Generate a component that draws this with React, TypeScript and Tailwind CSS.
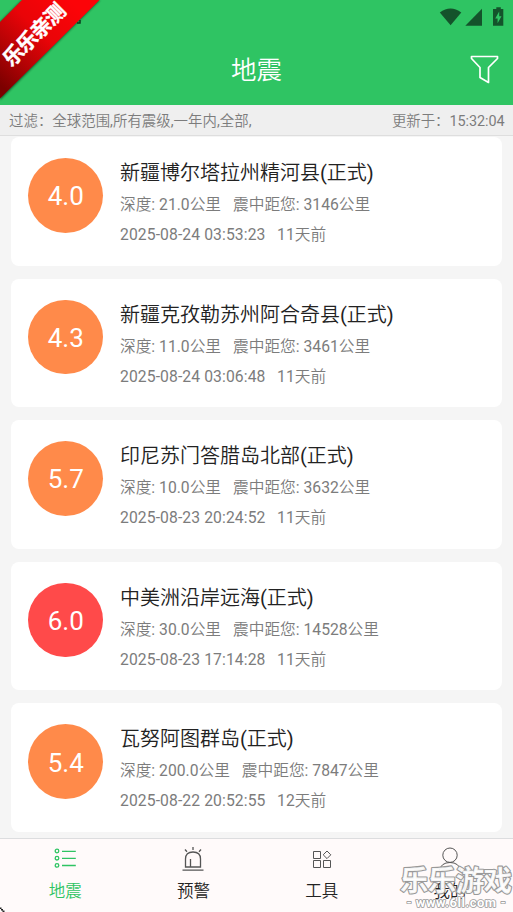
import React from "react";

type Quake = {
  mag: string;
  place: string;
  depth: string;
  distance: string;
  time: string;
  ago: string;
  strong?: boolean;
};

const quakes: Quake[] = [
  { mag: "4.0", place: "新疆博尔塔拉州精河县(正式)", depth: "21.0", distance: "3146", time: "2025-08-24 03:53:23", ago: "11天前" },
  { mag: "4.3", place: "新疆克孜勒苏州阿合奇县(正式)", depth: "11.0", distance: "3461", time: "2025-08-24 03:06:48", ago: "11天前" },
  { mag: "5.7", place: "印尼苏门答腊岛北部(正式)", depth: "10.0", distance: "3632", time: "2025-08-23 20:24:52", ago: "11天前" },
  { mag: "6.0", place: "中美洲沿岸远海(正式)", depth: "30.0", distance: "14528", time: "2025-08-23 17:14:28", ago: "11天前", strong: true },
  { mag: "5.4", place: "瓦努阿图群岛(正式)", depth: "200.0", distance: "7847", time: "2025-08-22 20:52:55", ago: "12天前" },
];

function QuakeCard({ q }: { q: Quake }) {
  return (
    <article className="flex h-[128.6px] shrink-0 rounded-[8px] bg-white pl-[17px]">
      <div
        className={`mt-[21px] flex size-[74.5px] shrink-0 items-center justify-center rounded-full text-[26px] text-white ${
          q.strong ? "bg-[#ff4a4a]" : "bg-[#ff8a4a]"
        }`}
      >
        <span className="pl-[1px] pt-[3px]">{q.mag}</span>
      </div>
      <div className="ml-[17.5px] flex flex-col whitespace-pre pt-[21px] text-[15.7px] text-[#7c7c7c]">
        <h2 className="text-[20px] leading-[30px] text-[#222]">{q.place}</h2>
        <p className="mt-[2px] leading-[30px]">
          深度: {q.depth}公里<span className="ml-[12px]">震中距您: {q.distance}公里</span>
        </p>
        <p className="leading-[30px] tracking-[0.1px]">
          {q.time}
          <span className="ml-[11.5px]">{q.ago}</span>
        </p>
      </div>
    </article>
  );
}

function StatusIcons() {
  return (
    <svg className="absolute left-[438px] top-[5px]" width="68" height="23" viewBox="438 5 68 23" fill="#14532b">
      <path d="M439.8 12.5Q450.5 4.5 461.3 12.5L450.6 25.3Z" />
      <path d="M482 8.8V25.8H465.3Z" />
      <path fillRule="evenodd" d="M496.3 7.2H500.8V9H503.3V25.8H493V9H496.3ZM499.2 11.5L495.2 18.4H497.6V23.2L501.5 16.2H499.2Z" />
    </svg>
  );
}

function Ribbon() {
  return (
    <svg className="absolute left-0 top-0" width="104" height="104" viewBox="0 0 104 104">
      <defs>
        <linearGradient id="ribbon" x1="75" y1="5" x2="0" y2="85" gradientUnits="userSpaceOnUse">
          <stop offset="0" stopColor="#fc0408" />
          <stop offset="0.4" stopColor="#e90408" />
          <stop offset="0.7" stopColor="#b50305" />
          <stop offset="1" stopColor="#7c0000" />
        </linearGradient>
        <filter id="shade" x="-20%" y="-20%" width="140%" height="140%">
          <feGaussianBlur stdDeviation="1.2" />
        </filter>
      </defs>
      <path d="M77 23H80V20" stroke="#0d3b1e" strokeWidth="1.5" fill="none" />
      <path d="M22 0H100L0 100V22Z" fill="#0d3b1e" opacity=".75" filter="url(#shade)" />
      <path d="M22 0H99.5L0 98.5V22Z" fill="url(#ribbon)" />
      <text
        transform="translate(33 33.5) rotate(-45)"
        textAnchor="middle"
        dominantBaseline="central"
        fill="#fff"
        stroke="#fff"
        strokeWidth="0.4"
        fontSize="20.5"
        fontWeight="700"
        fontFamily="'Noto Sans CJK SC', sans-serif"
        textLength="79"
      >
        乐乐亲测
      </text>
    </svg>
  );
}

const iconProps = { width: 24, height: 26, viewBox: "0 0 24 26", fill: "none", strokeWidth: 1 };

const tabs = [
  {
    label: "地震",
    active: true,
    icon: (
      <svg {...iconProps} stroke="#2fc463" strokeWidth="1.3">
        <circle cx="4" cy="5" r="1.8" />
        <circle cx="4" cy="12.2" r="1.8" />
        <circle cx="4" cy="19.4" r="1.8" />
        <path d="M9 5.3H22.8M9 12.4H22.8M9 19.5H22.8" />
      </svg>
    ),
  },
  {
    label: "预警",
    icon: (
      <svg {...iconProps} stroke="#555" strokeWidth="1.3">
        <path d="M4.5 21V13Q4.5 6 12 6T19.5 13V21ZM1.5 24.2H22.5M9.5 20.5V13M12 1V4M4 3.5L6 5.7M20 3.5L18 5.7" />
      </svg>
    ),
  },
  {
    label: "工具",
    icon: (
      <svg {...iconProps} stroke="#555">
        <path d="M3.5 5.5H10.5V12.5H3.5ZM3.5 14.5H10.5V21.5H3.5ZM13.5 14.5H20.5V21.5H13.5ZM17 5L20.8 8.8L17 12.6L13.2 8.8Z" />
      </svg>
    ),
  },
  {
    label: "我的",
    icon: (
      <svg {...iconProps} stroke="#555">
        <circle cx="12" cy="9.2" r="7.2" />
        <path d="M1 25Q3 16.5 12 16.5T23 25" />
      </svg>
    ),
  },
];

export default function App() {
  return (
    <div className="relative flex h-[912px] w-[513px] flex-col overflow-hidden bg-[#f5f5f5] font-[Roboto,'Noto_Sans_CJK_SC_DemiLight','Noto_Sans_CJK_SC',sans-serif]">
      <header className="relative flex h-[105px] shrink-0 items-end justify-center bg-[#2fc463] pb-[16px]">
        <h1 className="text-[25.5px] leading-[38px] text-white">地震</h1>
        <StatusIcons />
        <svg className="absolute left-[469px] top-[54px]" width="30" height="32" viewBox="0 0 30 32" fill="none" stroke="#fff" strokeWidth="1.7" strokeLinejoin="round">
          <path d="M2.5 2.5H28.5V4.5L19.5 13.5V28.5L11 23.5V13.5L2.5 4.5Z" />
        </svg>
        <Ribbon />
      </header>
      <div className="flex h-[31px] shrink-0 items-center justify-between border-b border-[#dedede] bg-[#efefef] pl-[9px] pr-[8.5px] pt-[4px] text-[14.4px] text-[#7c7c7c]">
        <span className="tracking-[0.05px]">过滤：全球范围,所有震级,一年内,全部,</span>
        <span className="tracking-[-0.05px]">更新于：15:32:04</span>
      </div>
      <main className="flex h-[702px] shrink-0 flex-col gap-[13px] overflow-hidden pl-[11px] pr-[11px] pt-[1px]">
        {quakes.map((q) => (
          <QuakeCard key={q.time} q={q} />
        ))}
      </main>
      <nav className="grid grow grid-cols-4 border-t border-[#dcdddf] bg-[#fffafa]">
        {tabs.map((t) => (
          <div key={t.label} className="flex flex-col items-center pl-[2px] pt-[7px]">
            {t.icon}
            <span className={`mt-[8px] text-[16.5px] leading-[24px] ${t.active ? "text-[#2fc463]" : "text-[#222]"}`}>{t.label}</span>
          </div>
        ))}
      </nav>
      <svg className="absolute bottom-0 left-0" width="5" height="5" viewBox="0 0 5 5">
        <path d="M0 0.5H1.5V2H3V3.5H4.5V5H2.5V3.5H1V2H0Z" fill="#222" />
      </svg>
      <svg className="absolute left-[393px] top-[860px]" width="120" height="52" viewBox="0 0 120 52">
        <g textAnchor="middle" stroke="#999" paintOrder="stroke" fill="#fff" strokeLinejoin="round">
          <text x="63" y="30.5" fontSize="28.5" fontWeight="700" fontFamily="'Noto Sans CJK SC', sans-serif" strokeWidth="2.2" textLength="112" fillOpacity="0.93">乐乐游戏</text>
          <text x="63" y="46.5" fontSize="13" fontWeight="700" strokeWidth="1.6" textLength="99">- www.6ll.com -</text>
        </g>
      </svg>
    </div>
  );
}
